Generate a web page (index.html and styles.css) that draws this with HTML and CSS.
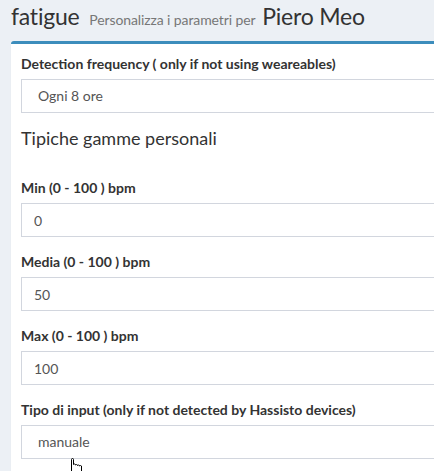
FILE: index.html
```html
<!DOCTYPE html>
<html lang="it">
<head>
  <meta charset="UTF-8">
  <title>fatigue - Personalizza i parametri</title>
  <link rel="stylesheet" href="styles.css">
</head>
<body>

  <div class="content">
    <h1 class="page-title">fatigue <small>Personalizza i parametri per</small> Piero Meo</h1>

    <div class="box">
      <div class="form-group">
        <label>Detection frequency ( only if not using weareables)</label>
        <div class="form-control select">Ogni 8 ore</div>
      </div>

      <h4 class="sub-title">Tipiche gamme personali</h4>

      <div class="form-group">
        <label>Min (0 - 100 ) bpm</label>
        <input class="form-control" type="text" value="0">
      </div>

      <div class="form-group">
        <label>Media (0 - 100 ) bpm</label>
        <input class="form-control" type="text" value="50">
      </div>

      <div class="form-group">
        <label>Max (0 - 100 ) bpm</label>
        <input class="form-control" type="text" value="100">
      </div>

      <div class="form-group">
        <label>Tipo di input (only if not detected by Hassisto devices)</label>
        <div class="form-control select">manuale</div>
      </div>
    </div>
  </div>

  <!-- mouse pointer -->
  <svg class="cursor" width="16" height="14" viewBox="0 0 16 14">
    <path d="M2.5 13.5 V1.5 Q2.5 0.5 3.5 0.5 Q4.5 0.5 4.5 1.5 V6.5 Q5.5 5.5 6.5 6.5 V7 Q7.5 6 8.5 7 V7.5 Q9.5 6.5 10.5 7.5 V8 Q11.5 7 12.5 8 V13.5" fill="#fff" stroke="#000" stroke-width="1"/>
  </svg>

</body>
</html>
```

FILE: styles.css
```css
body { margin: 0; background: #ecf0f5; font-family: Lato, "Open Sans", sans-serif; color: #333; overflow: hidden; position: relative; height: 471px; }
.content { width: 700px; padding: 0 0 0 11px; }
.page-title { margin: 0; padding: 2px 0 0; height: 39px; font-size: 23px; font-weight: 400; line-height: 28px; color: #333; letter-spacing: -0.2px; }
.page-title small { font-size: 14px; color: #777; margin: 0 1px 0 4px; letter-spacing: -0.1px; }
.box { background: #fff; border-top: 3px solid #3c8dbc; border-radius: 3px 0 0 0; box-shadow: 0 1px 1px rgba(0,0,0,.1); padding: 10px 10px 20px; }
.form-group { margin-bottom: 15px; }
label { display: block; font-weight: 700; font-size: 14px; line-height: 20px; margin-bottom: 5px; }
.form-control { display: block; box-sizing: border-box; width: 100%; height: 34px; padding: 6px 12px; border: 1px solid #d2d6de; font-family: inherit; font-size: 14px; line-height: 20px; color: #555; background: #fff; border-radius: 0; outline: none; }
.select { padding-left: 16px; }
.sub-title { margin: -1px 0 29px; font-size: 18px; font-weight: 400; line-height: 22px; }
.cursor { position: absolute; left: 69px; top: 458px; }
```
